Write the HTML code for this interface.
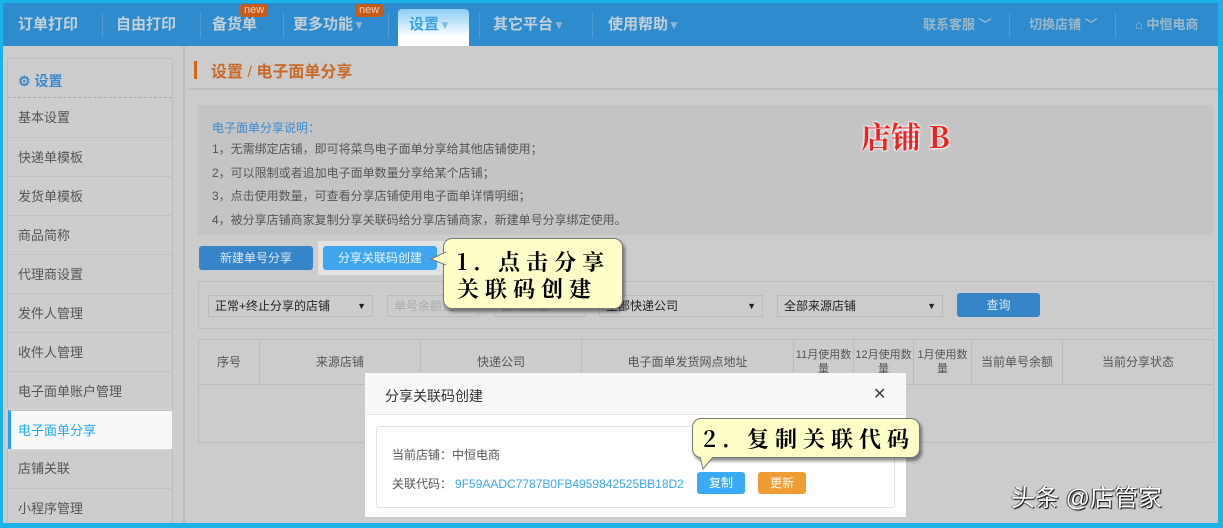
<!DOCTYPE html>
<html><head><meta charset="utf-8"><style>
*{margin:0;padding:0;box-sizing:border-box}
body{width:1223px;height:528px;overflow:hidden;background:#1ab2e8;font-family:"Liberation Sans","Noto Sans CJK SC",sans-serif;position:relative;font-size:12px;color:#555}
.a{position:absolute}
#frame{left:3px;top:3px;width:1215px;height:520px;background:#cccccc;overflow:hidden}
#nav{left:0;top:0;width:1215px;height:43px;background:#2e8bcd}
.ni{position:absolute;top:10px;color:#c4d0d8;font-size:15px;font-weight:bold}
.sep{position:absolute;top:9px;width:1px;height:26px;background:#4f9bd2}
.new{position:absolute;background:#c85a18;color:#e8d0c0;font-size:11px;border-radius:3px;padding:0 4px;height:13px;line-height:13px;top:1px}
.tri{color:#8fb5d5;font-size:12px}
.sb{left:4px;top:55px;width:166px;height:470px;border:1px solid #bdbdbd;background:#cdcdcd}
.si{position:absolute;left:0;width:164px;height:39px;line-height:39px;padding-left:10px;font-size:13px;color:#555;border-top:1px solid #c2c2c2}
.btn{position:absolute;color:#dde8f0;font-size:12px;text-align:center;border-radius:3px;line-height:24px}
.sel{position:absolute;height:22px;border:1px solid #bbb;background:#cccccc;font-size:12px;line-height:20px;padding-left:6px;color:#222}
.th{position:absolute;top:0;height:44px;border-right:1px solid #bbb;text-align:center;font-size:12px;color:#555;display:flex;align-items:center;justify-content:center;line-height:14px;white-space:nowrap}
.co{position:absolute;background:#fefec8;border:1px solid #777;border-radius:9px;box-shadow:2px 3px 3px rgba(0,0,0,.45);font-family:"Noto Serif CJK SC","Liberation Serif",serif;color:#000;font-size:22px;letter-spacing:6px;line-height:27px;font-weight:bold}
</style></head><body>
<div id="frame" class="a">
 <div id="nav" class="a">
  <div class="ni" style="left:15px">订单打印</div><div class="sep" style="left:99px"></div>
  <div class="ni" style="left:113px">自由打印</div><div class="sep" style="left:197px"></div>
  <div class="ni" style="left:209px">备货单</div><div class="new" style="left:237px">new</div><div class="sep" style="left:280px"></div>
  <div class="ni" style="left:290px">更多功能<span class="tri">▼</span></div><div class="new" style="left:352px">new</div><div class="sep" style="left:385px"></div>
  <div class="a" style="left:395px;top:6px;width:71px;height:37px;border-radius:4px 4px 0 0;background:linear-gradient(#8ccdf5,#ffffff 75%)"></div>
  <div class="ni" style="left:406px;color:#3aa0e0">设置<span class="tri" style="color:#7fbde8">▼</span></div>
  <div class="sep" style="left:476px"></div>
  <div class="ni" style="left:490px">其它平台<span class="tri">▼</span></div><div class="sep" style="left:589px"></div>
  <div class="ni" style="left:605px">使用帮助<span class="tri">▼</span></div>
  <div class="ni" style="left:920px;font-size:13px;top:11px;color:#9ab8cc">联系客服 ﹀</div><div class="sep" style="left:1006px"></div>
  <div class="ni" style="left:1026px;font-size:13px;top:11px;color:#9ab8cc">切换店铺 ﹀</div><div class="sep" style="left:1112px"></div>
  <div class="ni" style="left:1132px;font-size:13px;top:11px;color:#9ab8cc">⌂ 中恒电商</div>
 </div>
 <div class="a sb">
  <div class="a" style="left:10px;top:12px;color:#3a8ad0;font-size:14px;font-weight:bold">⚙ 设置</div>
  <div class="a" style="left:0;top:38px;width:164px;border-top:1px dashed #aaa"></div>
  <div class="si" style="top:39px;border:0">基本设置</div>
  <div class="si" style="top:78px">快递单模板</div>
  <div class="si" style="top:117px">发货单模板</div>
  <div class="si" style="top:156px">商品简称</div>
  <div class="si" style="top:195px">代理商设置</div>
  <div class="si" style="top:234px">发件人管理</div>
  <div class="si" style="top:273px">收件人管理</div>
  <div class="si" style="top:312px">电子面单账户管理</div>
  <div class="si" style="top:351px;background:#f8f8f8;color:#22aaee;border-left:3px solid #2aa0f0;padding-left:7px;box-shadow:0 0 4px #ddd">电子面单分享</div>
  <div class="si" style="top:390px;border-top:0">店铺关联</div>
  <div class="si" style="top:429px">小程序管理</div>
 </div>
 <div class="a" style="left:180px;top:43px;width:2px;height:480px;background:#bcbcbc"></div>
 <div class="a" style="left:191px;top:58px;width:3px;height:18px;background:#d06818"></div>
 <div class="a" style="left:208px;top:55px;font-size:16px;font-weight:bold;color:#c86a28">设置 <span style="font-weight:normal">/</span> 电子面单分享</div>
 <div class="a" style="left:186px;top:85px;width:1100px;height:2px;background:#bdbdbd"></div>
 <div class="a" style="left:195px;top:102px;width:1015px;height:130px;background:#c4c4c4"></div>
 <div class="a" style="left:209px;top:115px;color:#3a8ad0;font-size:12px;line-height:20px">电子面单分享说明：</div>
 <div class="a" style="left:209px;top:135px;font-size:12px;line-height:23.5px;color:#555">
  1，无需绑定店铺，即可将菜鸟电子面单分享给其他店铺使用；<br>2，可以限制或者追加电子面单数量分享给某个店铺；<br>3，点击使用数量，可查看分享店铺使用电子面单详情明细；<br>4，被分享店铺商家复制分享关联码给分享店铺商家，新建单号分享绑定使用。
 </div>
 <div class="a" style="left:858px;top:110px;font-family:'Noto Serif CJK SC',serif;font-size:30px;font-weight:bold;color:#ee2222;text-shadow:0 0 2px #fff,0 0 2px #fff,0 0 3px #fff">店铺 B</div>
 <div class="btn" style="left:196px;top:243px;width:114px;background:#3585c8">新建单号分享</div>
 <div class="a" style="left:315px;top:238px;width:128px;height:34px;background:#e2e2e2"></div>
 <div class="btn" style="left:320px;top:243px;width:114px;background:#3fa6ee;color:#eef6ff">分享关联码创建</div>
 <div class="a" style="left:195px;top:278px;width:1016px;height:48px;border:1px solid #bdbdbd"></div>
 <div class="sel" style="left:205px;top:292px;width:165px">正常+终止分享的店铺<span style="position:absolute;right:6px;font-size:9px">▼</span></div>
 <div class="sel" style="left:384px;top:292px;width:92px;color:#aaa">单号余额选</div>
 <div class="sel" style="left:491px;top:292px;width:92px;color:#aaa">使用数量</div>
 <div class="sel" style="left:596px;top:292px;width:164px">全部快递公司<span style="position:absolute;right:6px;font-size:9px">▼</span></div>
 <div class="sel" style="left:774px;top:292px;width:166px">全部来源店铺<span style="position:absolute;right:6px;font-size:9px">▼</span></div>
 <div class="btn" style="left:954px;top:290px;width:83px;background:#3585c8">查询</div>
 <div class="a" style="left:195px;top:336px;width:1016px;height:104px;border:1px solid #bdbdbd">
  <div class="a" style="left:0;top:44px;width:1014px;height:1px;background:#bdbdbd"></div>
  <div class="th" style="left:0;width:61px">序号</div>
  <div class="th" style="left:61px;width:161px">来源店铺</div>
  <div class="th" style="left:222px;width:161px">快递公司</div>
  <div class="th" style="left:383px;width:212px">电子面单发货网点地址</div>
  <div class="th" style="left:595px;width:60px;font-size:11px">11月使用数<br>量</div>
  <div class="th" style="left:655px;width:60px;font-size:11px">12月使用数<br>量</div>
  <div class="th" style="left:715px;width:58px;font-size:11px">1月使用数<br>量</div>
  <div class="th" style="left:773px;width:91px">当前单号余额</div>
  <div class="th" style="left:864px;width:150px;border:0">当前分享状态</div>
 </div>
 <div class="a" style="left:362px;top:370px;width:541px;height:144px;background:#fff">
  <div class="a" style="left:0;top:0;width:541px;height:42px;background:#f8f8f8;border-bottom:1px solid #e6e6e6"></div>
  <div class="a" style="left:20px;top:13px;font-size:14px;color:#333">分享关联码创建</div>
  <div class="a" style="left:508px;top:11px;font-size:16px;color:#444">✕</div>
  <div class="a" style="left:11px;top:53px;width:519px;height:82px;border:1px solid #e2e2e2;border-radius:3px"></div>
  <div class="a" style="left:27px;top:73px;font-size:12px;color:#555">当前店铺：中恒电商</div>
  <div class="a" style="left:27px;top:102px;font-size:12px;color:#555">关联代码：<span style="color:#3aa6ee;margin-left:3px">9F59AADC7787B0FB4959842525BB18D2</span></div>
  <div class="btn" style="left:332px;top:99px;width:48px;height:22px;line-height:22px;background:#3aaaf4;color:#fff">复制</div>
  <div class="btn" style="left:393px;top:99px;width:48px;height:22px;line-height:22px;background:#ef9c34;color:#fff">更新</div>
 </div>
 <div class="co" style="left:440px;top:235px;width:180px;height:71px;padding:9px 0 0 13px">1. 点击分享<br>关联码创建</div>
 <svg class="a" style="left:427px;top:248px" width="16" height="16"><path d="M16 1 L1 8 L16 14" fill="#fefec8" stroke="#777"/></svg>
 <div class="co" style="left:689px;top:415px;width:228px;height:40px;padding:6px 0 0 10px">2. 复制关联代码</div>
 <svg class="a" style="left:694px;top:454px" width="20" height="14"><path d="M3 0 L6 12 L16 0" fill="#fefec8" stroke="#777"/></svg>
 <div class="a" style="left:1008px;top:475px;font-size:24px;color:#fff;text-shadow:1px 1px 1px #000,-1px 0 1px #444">头条 @店管家</div>
</div>
</body></html>
